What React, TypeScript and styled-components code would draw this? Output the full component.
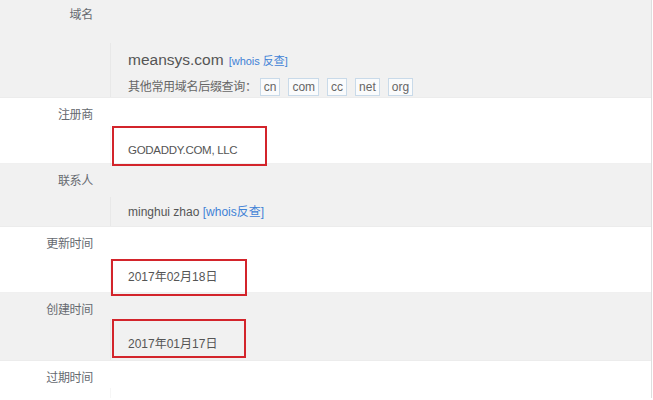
import React from "react";
import styled, { createGlobalStyle } from "styled-components";

const Global = createGlobalStyle`
  html, body { margin: 0; padding: 0; background: #fff; }
  body { font-family: "Liberation Sans", "Noto Sans CJK SC", sans-serif; }
`;

const Page = styled.div`
  width: 651px;
  height: 400px;
  overflow: hidden;
  border-right: 1px solid #dedede;
  margin-top: -2px;
`;

const Row = styled.div<{ $alt?: boolean; $h: number }>`
  display: flex;
  flex-direction: column;
  height: ${(p) => p.$h}px;
  box-sizing: border-box;
  background: ${(p) => (p.$alt ? "#f1f1f1" : "#ffffff")};
  border-bottom: 1px solid ${(p) => (p.$alt ? "#ececec" : "#f0f0f0")};
`;

const Label = styled.div`
  width: 93px;
  padding-top: 9px;
  text-align: right;
  font-size: 12px;
  line-height: 16px;
  letter-spacing: -0.3px;
  color: #666a70;
`;

const Value = styled.div<{ $mt: number; $pt?: number }>`
  flex: 1;
  margin-left: 110px;
  margin-top: ${(p) => p.$mt}px;
  padding-top: ${(p) => p.$pt ?? 0}px;
  padding-left: 17px;
  border-left: 1px solid rgba(0, 0, 0, 0.035);
  font-size: 12px;
  line-height: 16px;
  color: #555;
`;

const Domain = styled.div`
  display: flex;
  align-items: baseline;
  gap: 5px;
  line-height: 22px;
`;

const DomainName = styled.span`
  font-size: 15.5px;
  color: #555;
`;

const Link = styled.span<{ $size?: number }>`
  font-size: ${(p) => p.$size ?? 12}px;
  color: #3f82d6;
`;

const SuffixLine = styled.div`
  display: flex;
  align-items: center;
  margin-top: 6px;
  height: 18px;
  font-size: 12px;
  color: #666;
  letter-spacing: -0.3px;
`;

const Tags = styled.div`
  display: flex;
  gap: 8px;
  margin-left: 3px;
`;

const Tag = styled.span`
  display: inline-block;
  height: 16px;
  line-height: 16px;
  padding: 0 3px;
  border: 1px solid #c9dae9;
  background: #fafbfc;
  color: #666;
  font-size: 12px;
  letter-spacing: 0;
`;

const Highlight = styled.div<{ $w: number; $pt: number; $pb: number; $ml: number }>`
  display: inline-block;
  box-sizing: border-box;
  width: ${(p) => p.$w}px;
  margin-left: ${(p) => p.$ml}px;
  padding: ${(p) => p.$pt}px 0 ${(p) => p.$pb}px ${(p) => -p.$ml - 2}px;
  border: 2px solid #d3242b;
  font-size: 12px;
  line-height: 16px;
  color: #555;
  vertical-align: top;
`;

const Registrar = styled.span`
  font-size: 11.5px;
  letter-spacing: -0.3px;
`;

const Plain = styled.div`
  font-size: 12px;
  line-height: 16px;
  color: #555;
`;

export default function App() {
  return (
    <>
      <Global />
      <Page>
        <Row $alt $h={100}>
          <Label>域名</Label>
          <Value $mt={20} $pt={6}>
            <Domain>
              <DomainName>meansys.com</DomainName>
              <Link $size={11}>[whois 反查]</Link>
            </Domain>
            <SuffixLine>
              其他常用域名后缀查询：
              <Tags>
                <Tag>cn</Tag>
                <Tag>com</Tag>
                <Tag>cc</Tag>
                <Tag>net</Tag>
                <Tag>org</Tag>
              </Tags>
            </SuffixLine>
          </Value>
        </Row>
        <Row $h={66}>
          <Label>注册商</Label>
          <Value $mt={3}>
            <Highlight $w={155} $pt={14} $pb={6} $ml={-16}>
              <Registrar>GODADDY.COM, LLC</Registrar>
            </Highlight>
          </Value>
        </Row>
        <Row $alt $h={63}>
          <Label>联系人</Label>
          <Value $mt={8} $pt={7}>
            <Plain>
              minghui zhao <Link>[whois反查]</Link>
            </Plain>
          </Value>
        </Row>
        <Row $h={66}>
          <Label>更新时间</Label>
          <Value $mt={7}>
            <Highlight $w={136} $pt={8} $pb={9} $ml={-17}>
              2017年02月18日
            </Highlight>
          </Value>
        </Row>
        <Row $alt $h={68}>
          <Label>创建时间</Label>
          <Value $mt={1}>
            <Highlight $w={134} $pt={15} $pb={4} $ml={-16}>
              2017年01月17日
            </Highlight>
          </Value>
        </Row>
        <Row $h={60}>
          <Label>过期时间</Label>
          <Value $mt={2} />
        </Row>
      </Page>
    </>
  );
}
